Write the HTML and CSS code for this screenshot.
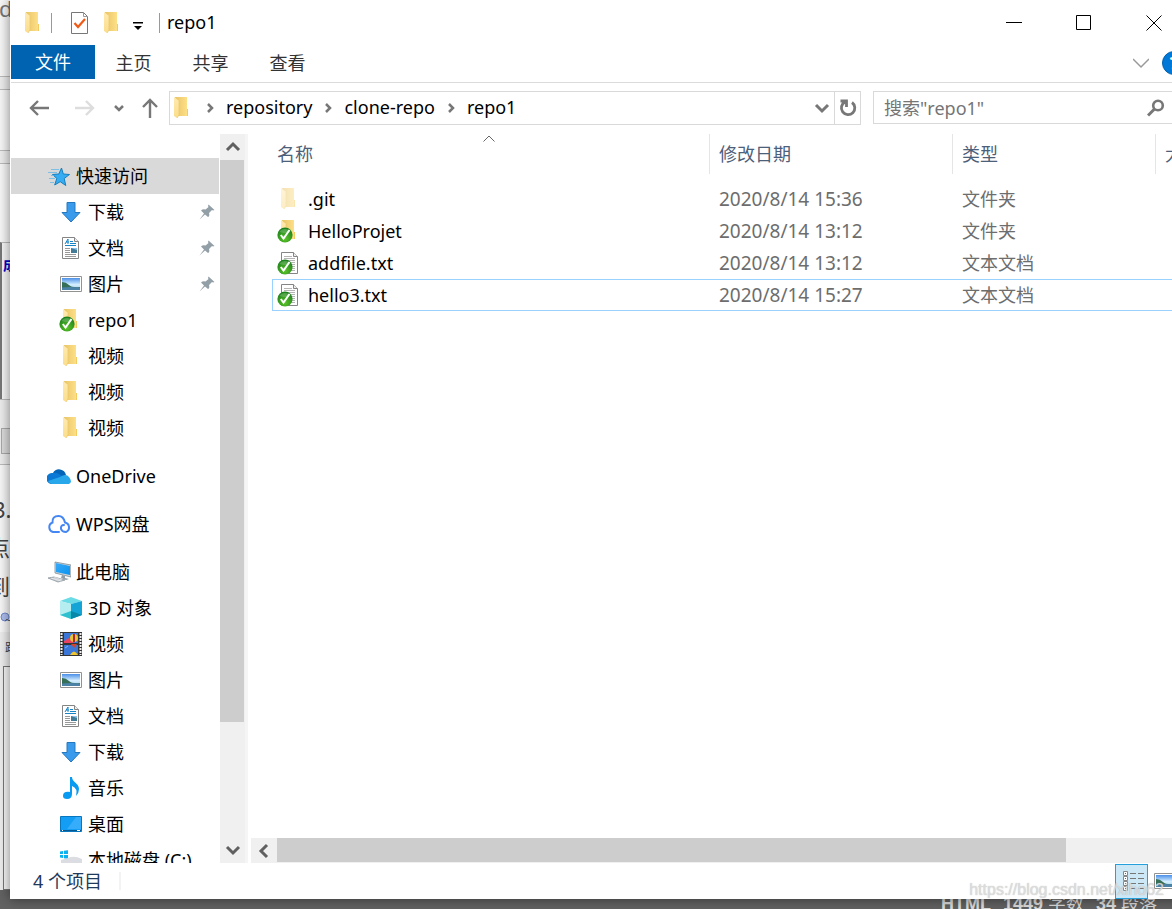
FILE: index.html
```html
<!DOCTYPE html>
<html lang="zh-CN">
<head>
<meta charset="utf-8">
<title>repo1</title>
<link rel="stylesheet" href="styles.css">
</head>
<body>
<svg class="defs" aria-hidden="true">
  <defs>
    <linearGradient id="gBack" x1="0" x2="1"><stop offset="0" stop-color="#e9c468"/><stop offset="1" stop-color="#ffe28a"/></linearGradient>
    <linearGradient id="gFlap" x1="0" x2="0" y1="0" y2="1"><stop offset="0" stop-color="#ffeab0"/><stop offset="1" stop-color="#fbdd8b"/></linearGradient>
    <radialGradient id="gOk" cx=".5" cy=".75" r=".7"><stop offset="0" stop-color="#5cc328"/><stop offset="1" stop-color="#1b801b"/></radialGradient>
    <linearGradient id="gSky" x1="0" x2="0" y1="0" y2="1"><stop offset="0" stop-color="#4a8fe8"/><stop offset=".55" stop-color="#d5efff"/><stop offset="1" stop-color="#9fcbe6"/></linearGradient>
    <linearGradient id="gBlue" x1="0" x2="1" y1="0" y2="1"><stop offset="0" stop-color="#39a9f5"/><stop offset="1" stop-color="#0a94f2"/></linearGradient>
    <symbol id="folder" viewBox="0 0 24 24">
      <path d="M5 1h12v12h1v7H7z" fill="url(#gBack)"/><path d="M17 13h1v7h-1z" fill="#f2cc62"/>
      <path d="M4 1l5 4v14l-2 3-3-2z" fill="url(#gFlap)"/><path d="M9 5v14l-2 3" fill="none" stroke="#e9c76e" stroke-width=".7"/>
    </symbol>
    <symbol id="badge" viewBox="0 0 24 24">
      <circle cx="8" cy="16" r="7.600" fill="url(#gOk)"/><path d="M2.500 13a6 5 0 0 1 11 0q-5 2-11 0z" fill="#fff" opacity=".2"/>
      <path d="M3.800 16l2.700 3.500 6-8.500" fill="none" stroke="#fff" stroke-width="2"/>
    </symbol>
    <symbol id="textfile" viewBox="0 0 24 24">
      <path d="M4.500 1.500h12l4 4v17h-16z" fill="#fff" stroke="#858585"/><path d="M16.500 1.500v4h4" fill="#eee" stroke="#858585"/>
      <path d="M7 5.500h8M7 7.500h11M7 9.500h11M7 11.500h11M7 13.500h11M7 15.500h11M7 17.500h11M7 19.500h11" stroke="#b5b5b5"/>
    </symbol>
    <symbol id="star" viewBox="0 0 24 24">
      <path d="M14.500 4l1.800 6 6.200.500-5.300 4 1.600 7-5.600-3.800L7.700 21l2.100-6.600L5.500 10.500l6.300-.500z" fill="#36adf3" stroke="#147fc0"/>
      <path d="M4 5.500h8M1 8.500h9M4 11.500h3M2 14.500h6M3 18.500h4" stroke="#68b9ea" stroke-width=".8"/>
    </symbol>
    <symbol id="down" viewBox="0 0 24 24"><path d="M8 2.500h8v10h5L12 22 3 12.500h5z" fill="#3a9aec" stroke="#2678be"/></symbol>
    <symbol id="document" viewBox="0 0 24 24">
      <path d="M3.500 1.500h12l4 4v17h-16z" fill="#fff" stroke="#858585"/><path d="M15.500 1.500v4h4" fill="#eee" stroke="#858585"/>
      <path d="M6 8l3-5v5M7 6h3" fill="none" stroke="#1784c8"/><path d="M11 5.500h3M11 7.500h6M6 9.500h11" stroke="#1784c8"/>
      <path d="M6 12.500h5M6 14.500h5M6 16.500h5M6 18.500h11M6 20.500h11" stroke="#999"/><path d="M12 12h6v5h-6z" fill="#437a96"/><path d="M12 12h6v2z" fill="#8fc4ed"/>
    </symbol>
    <symbol id="picture" viewBox="0 0 24 24">
      <path d="M1.500 4.500h21v15h-21z" fill="#fff" stroke="#929292"/><path d="M3 6h18v12H3z" fill="url(#gSky)"/>
      <path d="M3 10q4 0 7 3t11 2v1H3z" fill="#366f58"/><path d="M3 15.500q8-1 18 0V18H3z" fill="#4b82a6"/>
    </symbol>
    <symbol id="onedrive" viewBox="0 0 24 24">
      <path d="M6 9a7 7 0 0 1 13 2l-5 3z" fill="#0364b8"/><path d="M4 20a5.500 5.500 0 0 1 2-11q3-1 6 1l8 5-3 4z" fill="#0a78d4"/>
      <path d="M13 13q6-4 9 0 4 5 0 7H5q-2 0-4-3z" fill="#28a8ea"/>
    </symbol>
    <symbol id="wps" viewBox="0 0 24 24" fill="none" stroke="#4486f4" stroke-width="2" stroke-linecap="round">
      <path d="M12 20H6a5 5 0 0 1-.500-9.500Q5 4 11.500 4q5 0 6.500 6.500a5 5 0 0 1 1 9.500q-4 0-5-3-.500-4 3-4"/>
    </symbol>
    <symbol id="pc" viewBox="0 0 24 24">
      <path d="M8 2l16 3v12L8 13z" fill="#d4d7d9" stroke="#7c8a93" stroke-width=".8"/><path d="M9 3l14 3v9L9 12z" fill="url(#gBlue)"/>
      <path d="M15 15l3 1v2l4 1-3 1-5-2z" fill="#929fa8"/><path d="M1 18l6-1 11 3-7 2z" fill="#c9ced2" stroke="#8b969e" stroke-width=".8"/><path d="M4 18l10 3M7 17l8 3" stroke="#fff" stroke-width=".5"/>
    </symbol>
    <symbol id="cube" viewBox="0 0 24 24">
      <path d="M1 5l11-4 11 4-11 3z" fill="#6bdbe5"/><path d="M1 5l11 3v15L1 19z" fill="#b5edf0"/><path d="M23 5L12 8v15l11-4z" fill="#14a5d6"/>
      <path d="M1 19l11-4v8z" fill="#2fc0cf"/><path d="M23 19l-11-4v8z" fill="#0788a8"/>
    </symbol>
    <symbol id="film" viewBox="0 0 24 24">
      <path d="M1 0h22v24H1z" fill="#343434"/><path d="M2.500 1v22M21.500 1v22" stroke="#eee" stroke-width="2" stroke-dasharray="2 1"/>
      <path d="M5 1h14v10H5zM5 13h14v10H5z" fill="#3976d8"/><path d="M5 9l5-3 4 3v2H5z" fill="#e84362"/><circle cx="15" cy="6" r="4" fill="#eac532"/><path d="M14 2h2v8h-2z" fill="#b72630"/>
      <path d="M12 12h6l-3 4z" fill="#d6432b"/><path d="M11 23q4-7 8 0z" fill="#f1c52d"/><path d="M6 16l3-2" stroke="#7fb3f5"/>
    </symbol>
    <symbol id="music" viewBox="0 0 24 24"><path d="M11 1h2c0 5 7 6 7 12q0 4-3 7 2-8-4-10v8q0 5-5 5-4 0-4-3 0-5 7-4z" fill="#099bf1"/></symbol>
    <symbol id="desktop" viewBox="0 0 24 24"><path d="M1.500 4.500h21v15h-21z" fill="#149df4" stroke="#0877bd"/><path d="M17 5h5v12H8z" fill="#35adfa"/><path d="M2 18.500h20" stroke="#075791"/><path d="M3 18.500h1M18 18.500h3" stroke="#fff"/></symbol>
    <symbol id="disk" viewBox="0 0 24 24"><path d="M1 3.500l3-.500v3H1zM5 2.800l4-.600v3.800H5zM1 7h3v3l-3-.400zM5 7h4v4l-4-.700z" fill="#0bb2ef"/><path d="M9 10q6-3 14 1v4H2v-3z" fill="#dcdde2"/></symbol>
    <symbol id="pin" viewBox="0 0 16 16"><path d="M9.500.500l6 5.500-1.500.500-1-.500-3 3q1 3-1 4L6 10.500.500 15.500 5 9.500 2 6.500q2-2 4.500-1l3-2.500-.500-1z" fill="#929fa7"/></symbol>
    <symbol id="check-page" viewBox="0 0 24 24"><path d="M3.500 1.500h12l4 4v17h-16z" fill="#fff" stroke="#777"/><path d="M15.500 1.500v4h4" fill="none" stroke="#999"/><path d="M6.500 12l3.500 4 7-8" fill="none" stroke="#f05a16" stroke-width="2.200"/></symbol>
    <symbol id="arrow-left" viewBox="0 0 24 24"><path d="M22 12H4M11 5l-7 7 7 7" fill="none" stroke="currentColor" stroke-width="2.400"/></symbol>
    <symbol id="chev-down" viewBox="0 0 16 16"><path d="M2 5l6 6 6-6" fill="none" stroke="currentColor" stroke-width="3"/></symbol>
    <symbol id="chev-bold" viewBox="0 0 10 10"><path d="M1 3l4 4 4-4" fill="none" stroke="currentColor" stroke-width="2.500"/></symbol>
    <symbol id="chev-thin" viewBox="0 0 16 16"><path d="M0 4l8 8 8-8" fill="none" stroke="currentColor" stroke-width="1.500"/></symbol>
  </defs>
</svg>

<div class="backdrop" aria-hidden="true">
  <span class="bit bit-d">d</span>
  <span class="bar bar-top"></span>
  <span class="bar bar-mid"></span>
  <span class="panel panel-a"></span>
  <span class="bit bit-blue">成</span>
  <span class="bar bar-low"></span>
  <span class="panel panel-b"></span>
  <span class="bit bit-num">3.</span>
  <span class="bit bit-dian">点</span>
  <span class="bit bit-dao">到</span>
  <svg class="bit-cloud" viewBox="0 0 12 12"><circle cx="5" cy="6" r="4" fill="#aebff0" stroke="#7389c9"/><path d="M5 10l2-2 2 2 2-2" fill="none" stroke="#666"/></svg>
  <span class="bar bar-form"></span>
  <span class="bit bit-gen">跟</span>
  <span class="panel panel-c"></span>
  <div class="editor-bar"><b>HTML</b><b>1449</b><span>字数</span><b>34</b><span>段落</span></div>
</div>

<main class="window">
  <header class="titlebar">
    <svg class="icon"><use href="#folder"/></svg><i class="sep"></i>
    <button class="quick" aria-label="属性"><svg class="icon"><use href="#check-page"/></svg></button>
    <button class="quick" aria-label="新建文件夹"><svg class="icon"><use href="#folder"/></svg></button>
    <button class="quick more" aria-label="自定义"><svg viewBox="0 0 10 8"><path d="M0 0h10v1.500H0zM1 4h8L5 8z"/></svg></button>
    <i class="sep"></i><h1>repo1</h1>
    <div class="controls">
      <button aria-label="最小化"><svg viewBox="0 0 16 16"><path d="M0 7.500h16"/></svg></button>
      <button aria-label="最大化"><svg viewBox="0 0 16 16"><path d="M.500.500h14v14H.500z"/></svg></button>
      <button aria-label="关闭"><svg viewBox="0 0 16 16"><path d="M.500.500l15 15M15.500.500l-15 15"/></svg></button>
    </div>
  </header>

  <nav class="ribbon">
    <button class="tab file">文件</button><button class="tab">主页</button><button class="tab">共享</button><button class="tab">查看</button>
    <button class="expand" aria-label="展开功能区"><svg><use href="#chev-thin"/></svg></button>
    <button class="help" aria-label="帮助">?</button>
  </nav>

  <div class="addressrow">
    <div class="history">
      <button aria-label="后退"><svg class="icon"><use href="#arrow-left"/></svg></button>
      <button class="off flip" aria-label="前进"><svg class="icon"><use href="#arrow-left"/></svg></button>
      <button class="recent" aria-label="最近位置"><svg class="tiny"><use href="#chev-bold"/></svg></button>
      <button class="up" aria-label="上移"><svg class="icon"><use href="#arrow-left"/></svg></button>
    </div>
    <div class="address">
      <svg class="icon"><use href="#folder"/></svg>
      <svg class="crumb-arrow"><use href="#chev-bold"/></svg><a href="#">repository</a>
      <svg class="crumb-arrow"><use href="#chev-bold"/></svg><a href="#">clone-repo</a>
      <svg class="crumb-arrow"><use href="#chev-bold"/></svg><a href="#">repo1</a>
      <button class="drop" aria-label="以前的位置"><svg><use href="#chev-down"/></svg></button>
      <button class="refresh" aria-label="刷新"><svg viewBox="0 0 20 20"><path d="M14 4.500a6.700 6.700 0 1 1-7-.500M2.500 3h6v6" fill="none" stroke="currentColor" stroke-width="2.800"/></svg></button>
    </div>
    <label class="search"><input type="text" placeholder='搜索"repo1"' aria-label="搜索">
      <svg viewBox="0 0 18 18"><circle cx="11" cy="6.500" r="4.800" fill="none" stroke="currentColor" stroke-width="2.600"/><path d="M7.500 10L1 16.500" stroke="currentColor" stroke-width="3"/></svg></label>
  </div>

  <div class="content">
    <nav class="tree">
      <ul>
        <li><a class="root on" href="#"><svg class="icon"><use href="#star"/></svg>快速访问</a></li>
        <li><a href="#"><svg class="icon"><use href="#down"/></svg>下载<svg class="pin"><use href="#pin"/></svg></a></li>
        <li><a href="#"><svg class="icon"><use href="#document"/></svg>文档<svg class="pin"><use href="#pin"/></svg></a></li>
        <li><a href="#"><svg class="icon"><use href="#picture"/></svg>图片<svg class="pin"><use href="#pin"/></svg></a></li>
        <li><a href="#"><svg class="icon"><use href="#folder"/><use href="#badge"/></svg>repo1</a></li>
        <li><a href="#"><svg class="icon"><use href="#folder"/></svg>视频</a></li>
        <li><a href="#"><svg class="icon"><use href="#folder"/></svg>视频</a></li>
        <li><a href="#"><svg class="icon"><use href="#folder"/></svg>视频</a></li>
      </ul>
      <ul><li><a class="root" href="#"><svg class="icon"><use href="#onedrive"/></svg>OneDrive</a></li></ul>
      <ul><li><a class="root" href="#"><svg class="icon"><use href="#wps"/></svg>WPS网盘</a></li></ul>
      <ul>
        <li><a class="root" href="#"><svg class="icon"><use href="#pc"/></svg>此电脑</a></li>
        <li><a href="#"><svg class="icon"><use href="#cube"/></svg>3D 对象</a></li>
        <li><a href="#"><svg class="icon"><use href="#film"/></svg>视频</a></li>
        <li><a href="#"><svg class="icon"><use href="#picture"/></svg>图片</a></li>
        <li><a href="#"><svg class="icon"><use href="#document"/></svg>文档</a></li>
        <li><a href="#"><svg class="icon"><use href="#down"/></svg>下载</a></li>
        <li><a href="#"><svg class="icon"><use href="#music"/></svg>音乐</a></li>
        <li><a href="#"><svg class="icon"><use href="#desktop"/></svg>桌面</a></li>
        <li><a href="#"><svg class="icon"><use href="#disk"/></svg>本地磁盘 (C:)</a></li>
      </ul>
    </nav>
    <div class="scroll vertical">
      <button class="back" aria-label="向上滚动"><svg><use href="#chev-down"/></svg></button>
      <div class="track"><div class="thumb"></div></div>
      <button aria-label="向下滚动"><svg><use href="#chev-down"/></svg></button>
    </div>
    <section class="files">
      <div class="listing">
        <table>
          <colgroup><col class="c-name"><col class="c-date"><col class="c-type"><col></colgroup>
          <thead><tr><th>名称<svg class="sort" viewBox="0 0 12 7"><path d="M.500 6.500L6 1l5.500 5.500" fill="none" stroke="#666"/></svg></th><th>修改日期</th><th>类型</th><th>大小</th></tr></thead>
          <tbody>
            <tr><td><div class="name"><svg class="icon faded"><use href="#folder"/></svg>.git</div></td><td class="date">2020/8/14 15:36</td><td>文件夹</td><td></td></tr>
            <tr><td><div class="name"><svg class="icon"><use href="#folder"/><use href="#badge"/></svg>HelloProjet</div></td><td class="date">2020/8/14 13:12</td><td>文件夹</td><td></td></tr>
            <tr><td><div class="name"><svg class="icon"><use href="#textfile"/><use href="#badge"/></svg>addfile.txt</div></td><td class="date">2020/8/14 13:12</td><td>文本文档</td><td></td></tr>
            <tr class="focus"><td><div class="name"><svg class="icon"><use href="#textfile"/><use href="#badge"/></svg>hello3.txt</div></td><td class="date">2020/8/14 15:27</td><td>文本文档</td><td></td></tr>
          </tbody>
        </table>
      </div>
      <div class="scroll horizontal">
        <button class="left" aria-label="向左滚动"><svg><use href="#chev-down"/></svg></button>
        <div class="track"><div class="thumb"></div></div>
        <button class="right" aria-label="向右滚动"><svg><use href="#chev-down"/></svg></button>
      </div>
    </section>
  </div>

  <footer class="status">
    <span class="count">4 个项目</span>
    <button class="view on" aria-label="详细信息"><svg viewBox="0 0 24 24"><path d="M3.500 2.500h4v4h-4zM3.500 7.500h4v4h-4zM3.500 12.500h4v4h-4zM3.500 17.500h4v4h-4z" fill="#fff" stroke="#888"/><path d="M5 4h1v1H5z" fill="#247db5"/><path d="M5 9h1v1H5z" fill="#247db5"/><path d="M5 14h1v1H5z" fill="#c33"/><path d="M5 19h1v1H5z" fill="#247db5"/><path d="M10 4.500h6M18 4.500h6M10 9.500h6M18 9.500h6M10 14.500h6M18 14.500h6M10 19.500h6M18 19.500h6" stroke="#777"/></svg></button>
    <button class="view" aria-label="大图标"><svg><use href="#picture"/></svg></button>
  </footer>
</main>
<div class="watermark">https://blog.csdn.net/xiho62</div>
</body>
</html>
```

FILE: styles.css
```css
* { box-sizing: border-box; }
body {
  margin: 0;
  height: 100vh;
  overflow: hidden;
  position: relative;
  background: #f4f4f4;
  color: #000;
  font: 18px/24px "Noto Sans", "Noto Sans CJK SC", sans-serif;
}
button { margin: 0; padding: 0; border: 0; background: none; color: inherit; font: inherit; display: flex; align-items: center; justify-content: center; }
a { color: inherit; text-decoration: none; }
ul { list-style: none; margin: 0; padding: 0; }
.defs { position: absolute; width: 0; height: 0; }
.icon { width: 24px; height: 24px; flex: none; }

/* Document behind the window */
.backdrop { position: absolute; inset: 0; overflow: hidden; background: #f8f8f8; color: #444; }
.backdrop > * { position: absolute; left: 0; }
.bit-d { top: -4px; left: -1px; font-size: 22px; color: #777; }
.bar { width: 12px; background: #eee; border: solid #bbb; border-width: 1px 0; }
.bar-top { top: 76px; height: 14px; }
.bar-mid { top: 150px; height: 14px; }
.panel-a { top: 242px; width: 12px; height: 157px; border-left: 2px solid #777; border-top: 1px solid #bbb; }
.bit-blue { top: 253px; left: 3px; color: #00c; font-size: 14px; font-weight: bold; }
.bar-low { top: 399px; height: 66px; }
.panel-b { top: 428px; left: 1px; width: 12px; height: 26px; border: 1px solid #aaa; background: #ddd; }
.bit-num { top: 497px; left: -7px; font-size: 22px; }
.bit-dian { top: 535px; left: -12px; font-size: 22px; }
.bit-dao { top: 574px; left: -12px; font-size: 22px; }
.bit-cloud { top: 611px; width: 12px; height: 12px; }
.bar-form { top: 632px; height: 258px; border: 0; }
.bit-gen { top: 636px; left: 5px; font-size: 12px; }
.panel-c { top: 666px; left: 3px; width: 12px; height: 224px; border: 1px solid #777; background: #f8f8f8; }
.backdrop .editor-bar {
  top: auto; bottom: 0; right: 0; height: 19px; padding: 2px 15px 0;
  display: flex; justify-content: flex-end; gap: 5px;
  background: #626262; color: #ddd;
  font: 18px/24px "Liberation Sans", "Noto Sans CJK SC", sans-serif;
}
.editor-bar b { margin-left: 7px; }

/* Explorer window */
.window {
  position: relative;
  height: calc(100vh - 10px);
  margin: 0 -17px 0 10px;
  padding-left: 1px;
  display: flex;
  flex-direction: column;
  background: #fff;
  box-shadow: 0 0 12px rgba(0, 0, 0, .5);
}
.titlebar { height: 45px; display: flex; align-items: center; padding-left: 10px; flex: none; }
.titlebar h1 { margin: 0; padding: 0 0 2px 7px; font: inherit; }
.sep { width: 1px; height: 20px; background: #999; margin-left: 6px; }
.quick { margin-left: 16px; }
.quick + .quick { margin-left: 8px; }
.more svg { width: 10px; height: 8px; margin-top: 6px; }
.quick.more { margin: 0 10px 0 9px; }
.controls { margin-left: auto; display: flex; }
.controls button { width: 70px; height: 45px; }
.controls svg { width: 16px; height: 16px; fill: none; stroke: #000; }

.ribbon { height: 38px; flex: none; display: flex; align-items: flex-start; border-bottom: 1px solid #dadbdc; color: #333; }
.tab { width: 77px; height: 36px; }
.tab.file { width: 84px; height: 34px; background: #0063b1; color: #fff; }
.expand { margin-left: auto; width: 20px; height: 36px; color: #999; }
.expand svg { width: 16px; height: 16px; }
.help { width: 24px; height: 24px; margin: 6px 3px 0 11px; border-radius: 50%; background: #0078d7; border: 1px solid #0063b1; color: #fff; font-weight: bold; }

.addressrow { display: flex; padding: 8px 8px 9px 0; flex: none; }
.history { width: 158px; padding-left: 16px; display: flex; align-items: center; color: #777; }
.history .off { color: #ddd; margin-left: 22px; }
.flip svg { transform: scaleX(-1); }
.up svg { transform: rotate(90deg); }
.history .recent { width: 30px; margin-left: 7px; }
.history .up { margin-left: 4px; }
.tiny { width: 10px; height: 10px; }
.address { flex: 1; height: 34px; border: 1px solid #d9d9d9; display: flex; align-items: center; }
.address a { padding-bottom: 2px; }
.crumb-arrow { width: 10px; height: 10px; margin: 0 11px; transform: rotate(-90deg); color: #777; flex: none; }
.address button { color: #777; height: 32px; }
.drop { margin-left: auto; width: 24px; }
.drop svg { width: 16px; height: 16px; }
.refresh { width: 26px; border-left: 1px solid #d9d9d9; }
.refresh svg { width: 20px; height: 20px; }
.search { width: 308px; height: 33px; margin-left: 12px; border: 1px solid #d9d9d9; display: flex; align-items: center; padding: 0 15px 0 10px; color: #777; }
.search input { flex: 1; min-width: 0; border: 0; padding: 0; outline: 0; background: none; font: inherit; color: #000; }
.search input::placeholder { color: #757575; opacity: 1; }
.search svg { width: 18px; height: 18px; }

.content { flex: 1; min-height: 0; display: flex; }
.tree { width: 209px; padding: 24px 1px 0 0; overflow: hidden; flex: none; }
.tree ul + ul { margin-top: 12px; }
.tree a { height: 36px; display: flex; align-items: center; gap: 5px; padding: 0 4px 0 48px; white-space: nowrap; }
.tree a.root { padding-left: 36px; }
.tree a.on { background: #d9d9d9; }
.pin { width: 16px; height: 16px; margin-left: auto; }

.scroll { display: flex; background: #f0f0f0; flex: none; color: #606060; }
.scroll button { width: 26px; height: 26px; flex: none; }
.scroll svg { width: 16px; height: 16px; }
.scroll .track { flex: 1; min-width: 0; min-height: 0; }
.scroll .thumb { background: #cdcdcd; }
.scroll.vertical { width: 25px; flex-direction: column; }
.vertical button { width: 25px; }
.vertical .thumb { width: 24px; height: 83%; }
.vertical .back svg { transform: rotate(180deg); }
.horizontal button { height: 25px; }
.horizontal .thumb { width: 89%; height: 24px; }
.horizontal .left svg { transform: rotate(90deg); }
.horizontal .right svg { transform: rotate(-90deg); }

.files { flex: 1; min-width: 0; display: flex; flex-direction: column; border-left: 3px solid #f5f5f5; padding-left: 3px; }
.listing { flex: 1; min-height: 0; overflow: hidden; padding-left: 21px; }
table { width: 100%; table-layout: fixed; border-collapse: separate; border-spacing: 0; white-space: nowrap; }
.c-name { width: 437px; }
.c-date { width: 243px; }
.c-type { width: 203px; }
th { position: relative; height: 40px; padding: 0 0 0 9px; text-align: left; font-weight: inherit; color: #4c607a; border-left: 1px solid #e5e5e5; }
th:first-child { border-left: 0; padding-left: 5px; }
th:last-child { overflow: hidden; }
.sort { position: absolute; width: 12px; height: 7px; top: 1px; left: 50%; margin-left: -8px; }
tbody::before { content: ""; display: block; height: 9px; }
td { height: 32px; padding: 0 0 0 10px; color: #6d6d6d; border: solid transparent; border-width: 1px 0; }
td:first-child { padding-left: 5px; color: #000; }
td.date { font-size: 19px; }
.name { display: flex; align-items: center; gap: 7px; }
.faded { opacity: .5; }
.focus td { border-color: #99d1ff; }
.focus td:first-child { border-left: 1px solid #99d1ff; padding-left: 4px; }

.status { height: 36px; flex: none; display: flex; align-items: center; padding: 0 8px 0 22px; color: #1e395b; }
.count { padding-right: 17px; border-right: 2px solid #f3f3f3; line-height: 18px; margin-right: auto; }
.view { width: 33px; height: 35px; border: 1px solid transparent; }
.view.on { background: #cce8f6; border-color: #26a0da; }
.view svg { width: 24px; height: 24px; }

.watermark { position: absolute; right: 8px; bottom: 7px; font: 16px/24px "Liberation Sans", sans-serif; color: rgba(225, 225, 225, .85); text-shadow: 0 0 1px rgba(120, 120, 120, .5); }
```
